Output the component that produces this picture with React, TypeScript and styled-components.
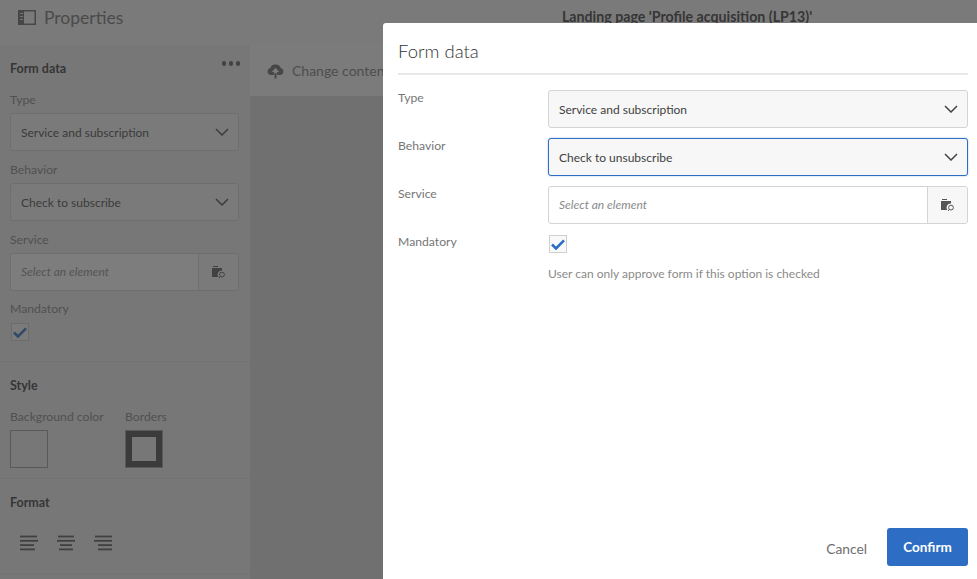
import React from "react";
import styled, { createGlobalStyle } from "styled-components";

const Global = createGlobalStyle`
  html, body { margin: 0; padding: 0; background: #f3f3f3; }
  * { box-sizing: border-box; }
`;

const font = `"Lato", "Noto Sans", sans-serif`;

const Screen = styled.div`
  position: relative;
  width: 977px;
  height: 579px;
  overflow: hidden;
  font-family: ${font};
  background: #d9d9d9;
`;
const TopBar = styled.header`
  height: 45px;
  background: #f7f7f7;
  display: grid;
  grid-template-columns: 562px 1fr;
  align-items: center;
`;
const TopLeft = styled.div`
  display: flex;
  align-items: center;
  gap: 8px;
  padding: 0 0 11px 18px;
  color: #6e6e6e;
  font-size: 17.5px;
  svg { display: block; }
`;
const PageTitle = styled.div`
  font-size: 14.2px;
  font-weight: 700;
  color: #333;
  padding-bottom: 13px;
  white-space: nowrap;
`;
const Body = styled.div`
  display: flex;
  height: 534px;
`;
const Side = styled.aside`
  width: 250px;
  background: #eeeeee;
  flex: none;
`;
const SideSection = styled.section<{ $h: number }>`
  height: ${(p) => p.$h}px;
  padding: 0 10px;
  border-bottom: 1px solid #e0e0e0;
  display: flex;
  flex-direction: column;
`;
const SectionHead = styled.div<{ $top: number }>`
  display: flex;
  justify-content: space-between;
  align-items: center;
  height: 16px;
  margin-top: ${(p) => p.$top}px;
  color: #333;
  font-weight: 700;
  font-size: 12.5px;
`;
const Dots = styled.span`
  display: flex;
  gap: 2.5px;
  margin: -9px 0 0 0;
  i { width: 4.5px; height: 4.5px; border-radius: 50%; background: #555; display: block; }
`;
const SideLabel = styled.div<{ $top: number }>`
  margin-top: ${(p) => p.$top}px;
  height: 16px;
  line-height: 16px;
  font-size: 12.2px;
  color: #808080;
  white-space: nowrap;
`;
const Spaced = styled.div<{ $top: number }>`
  margin-top: ${(p) => p.$top}px;
`;
const Select = styled.div<{ $focus?: boolean; $w: number }>`
  width: ${(p) => p.$w}px;
  height: 38px;
  border-radius: 3px;
  background: #f7f7f7;
  border: 1px solid ${(p) => (p.$focus ? "#2d6ec4" : "#d4d4d4")};
  box-shadow: ${(p) => (p.$focus ? "0 0 2px rgba(45,110,196,.45)" : "none")};
  display: flex;
  align-items: center;
  justify-content: space-between;
  padding: 0 9px 0 10px;
  font-size: 12px;
  color: #3f3f3f;
  white-space: nowrap;
`;
const InputGroup = styled.div<{ $w: number }>`
  width: ${(p) => p.$w}px;
  height: 38px;
  border-radius: 3px;
  background: #fff;
  border: 1px solid #d4d4d4;
  display: flex;
  align-items: stretch;
`;
const Placeholder = styled.div`
  flex: 1;
  display: flex;
  align-items: center;
  padding: 0 0 1px 10px;
  font-size: 12px;
  font-style: italic;
  color: #8a8a8a;
`;
const AddOn = styled.div`
  width: 40px;
  background: #f7f7f7;
  border-left: 1px solid #d4d4d4;
  display: flex;
  align-items: center;
  justify-content: center;
  border-radius: 0 3px 3px 0;
`;
const Check = styled.div`
  width: 18px;
  height: 18px;
  margin-left: 1px;
  border: 1px solid #cfcfcf;
  background: #f9f9f9;
  display: flex;
  align-items: center;
  justify-content: center;
`;
const SwatchRow = styled.div`
  display: grid;
  grid-template-columns: 115px 1fr;
`;
const Swatch = styled.div`
  width: 38px;
  height: 38px;
  background: #eeeeee;
  border: 1px solid #999;
`;
const BorderSwatch = styled.div`
  width: 38px;
  height: 38px;
  background: #eeeeee;
  border: 1px solid #999;
  box-shadow: inset 0 0 0 6px #444;
`;
const AlignRow = styled.div`
  display: flex;
  gap: 19px;
  margin: 25px 0 0 10px;
  color: #505050;
`;
const Main = styled.main`
  flex: 1;
`;
const ContentBar = styled.div`
  height: 51px;
  background: #f9f9f9;
  display: flex;
  align-items: center;
  gap: 8px;
  padding: 0 0 0 17px;
  font-size: 14px;
  color: #777;
  white-space: nowrap;
`;
const Scrim = styled.div`
  position: absolute;
  inset: 0;
  background: rgba(55, 55, 55, 0.65);
`;
const Modal = styled.div`
  position: absolute;
  left: 383px;
  top: 23px;
  right: 0;
  bottom: 0;
  background: #fff;
  border-radius: 3px 0 0 0;
  padding: 0 9px 13px 15px;
  display: flex;
  flex-direction: column;
`;
const ModalTitle = styled.h2`
  margin: 0;
  height: 52px;
  line-height: 56px;
  border-bottom: 2px solid #e8e8e8;
  font-size: 18.5px;
  font-weight: 300;
  color: #333;
`;
const Form = styled.div`
  flex: 1;
  display: grid;
  grid-template-columns: 150px 420px;
  grid-auto-rows: 38px;
  row-gap: 10px;
  padding-top: 15px;
  align-content: start;
`;
const FieldLabel = styled.div`
  font-size: 12.2px;
  line-height: 16px;
  color: #767676;
`;
const CheckCell = styled.div`
  padding-top: 1px;
`;
const Hint = styled.div`
  grid-column: 2;
  font-size: 12px;
  color: #8a8a8a;
  margin-top: -16px;
  white-space: nowrap;
`;
const Footer = styled.div`
  display: flex;
  justify-content: flex-end;
  align-items: center;
  gap: 20px;
`;
const Cancel = styled.button`
  border: 0;
  background: none;
  padding: 2px 0 0;
  font: 400 13.8px ${font};
  color: #6e6e6e;
`;
const Confirm = styled.button`
  width: 81px;
  height: 38px;
  border: 0;
  border-radius: 3px;
  background: #2d6ec4;
  color: #fff;
  font: 700 13.5px ${font};
`;

const Chevron = () => (
  <svg width="14" height="8" viewBox="0 0 14 8" fill="none" stroke="#444" strokeWidth="1.5">
    <path d="M1 1l6 6 6-6" />
  </svg>
);
const Tick = () => (
  <svg width="14" height="11" viewBox="0 0 14 11" fill="none" stroke="#2d6ec4" strokeWidth="2.6">
    <path d="M1 5.5l4 4L13 1.3" />
  </svg>
);
const FolderSearch = () => (
  <svg width="14" height="13" viewBox="0 0 14 13">
    <path d="M1 0h5v1H1z" fill="#555" />
    <path d="M0 2h10v2.6a4 4 0 0 0-3.6 6.4H0z" fill="#555" />
    <circle cx="10" cy="8.6" r="2.4" fill="none" stroke="#555" strokeWidth="1" />
    <path d="M8.4 10.4L7 12" stroke="#555" strokeWidth="1" />
  </svg>
);
const PanelIcon = () => (
  <svg width="18" height="15" viewBox="0 0 18 15">
    <rect x=".75" y=".75" width="16.5" height="13.5" fill="none" stroke="#666" strokeWidth="1.5" />
    <path d="M1 1h5v13H1z" fill="#666" />
    <path d="M2 3.5h3M2 6.5h3M2 9.5h3" stroke="#e8e8e8" strokeWidth="1" />
  </svg>
);
const Cloud = () => (
  <svg width="17" height="16" viewBox="0 0 17 16">
    <path
      d="M4 12a3.6 3.6 0 0 1-.6-7.1A5 5 0 0 1 8.500 1.500 5 5 0 0 1 13.600 4.900 3.600 3.600 0 0 1 13 12h-2.900V8.900h2.100L8.500 4.800 4.800 8.900h2.100V12z"
      fill="#666"
    />
    <path d="M7.500 10h2v5.500h-2z" fill="#666" />
  </svg>
);
const Align = ({ lines }: { lines: [number, number][] }) => (
  <svg width="18" height="16" viewBox="0 0 18 16" stroke="currentColor" strokeWidth="1.800">
    {lines.map(([a, b], i) => (
      <path key={i} d={`M${a} ${1.5 + i * 4.3}H${b}`} />
    ))}
  </svg>
);

export default function App() {
  return (
    <Screen>
      <Global />
      <TopBar>
        <TopLeft>
          <PanelIcon />
          Properties
        </TopLeft>
        <PageTitle>Landing page 'Profile acquisition (LP13)'</PageTitle>
      </TopBar>
      <Body>
        <Side>
          <SideSection $h={317}>
            <SectionHead $top={15}>
              Form data
              <Dots>
                <i />
                <i />
                <i />
              </Dots>
            </SectionHead>
            <SideLabel $top={16}>Type</SideLabel>
            <Spaced $top={5}>
              <Select $w={229}>
                Service and subscription
                <Chevron />
              </Select>
            </Spaced>
            <SideLabel $top={11}>Behavior</SideLabel>
            <Spaced $top={5}>
              <Select $w={229}>
                Check to subscribe
                <Chevron />
              </Select>
            </Spaced>
            <SideLabel $top={11}>Service</SideLabel>
            <Spaced $top={5}>
              <InputGroup $w={229}>
                <Placeholder>Select an element</Placeholder>
                <AddOn>
                  <FolderSearch />
                </AddOn>
              </InputGroup>
            </Spaced>
            <SideLabel $top={10}>Mandatory</SideLabel>
            <Spaced $top={6}>
              <Check>
                <Tick />
              </Check>
            </Spaced>
          </SideSection>
          <SideSection $h={117}>
            <SectionHead $top={15}>Style</SectionHead>
            <Spaced $top={16}>
              <SwatchRow>
                <SideLabel $top={0}>Background color</SideLabel>
                <SideLabel $top={0}>Borders</SideLabel>
              </SwatchRow>
            </Spaced>
            <Spaced $top={5}>
              <SwatchRow>
                <Swatch />
                <BorderSwatch />
              </SwatchRow>
            </Spaced>
          </SideSection>
          <SideSection $h={95}>
            <SectionHead $top={15}>Format</SectionHead>
            <AlignRow>
              <Align lines={[[0, 17], [0, 18], [0, 14], [0, 15]]} />
              <Align lines={[[1, 17], [0, 18], [3, 15], [2, 16]]} />
              <Align lines={[[1, 18], [0, 18], [4, 18], [4, 18]]} />
            </AlignRow>
          </SideSection>
        </Side>
        <Main>
          <ContentBar>
            <Cloud />
            Change content
          </ContentBar>
        </Main>
      </Body>
      <Scrim />
      <Modal>
        <ModalTitle>Form data</ModalTitle>
        <Form>
          <FieldLabel>Type</FieldLabel>
          <Select $w={420}>
            Service and subscription
            <Chevron />
          </Select>
          <FieldLabel>Behavior</FieldLabel>
          <Select $w={420} $focus>
            Check to unsubscribe
            <Chevron />
          </Select>
          <FieldLabel>Service</FieldLabel>
          <InputGroup $w={420}>
            <Placeholder>Select an element</Placeholder>
            <AddOn>
              <FolderSearch />
            </AddOn>
          </InputGroup>
          <FieldLabel>Mandatory</FieldLabel>
          <CheckCell>
            <Check>
              <Tick />
            </Check>
          </CheckCell>
          <Hint>User can only approve form if this option is checked</Hint>
        </Form>
        <Footer>
          <Cancel>Cancel</Cancel>
          <Confirm>Confirm</Confirm>
        </Footer>
      </Modal>
    </Screen>
  );
}
